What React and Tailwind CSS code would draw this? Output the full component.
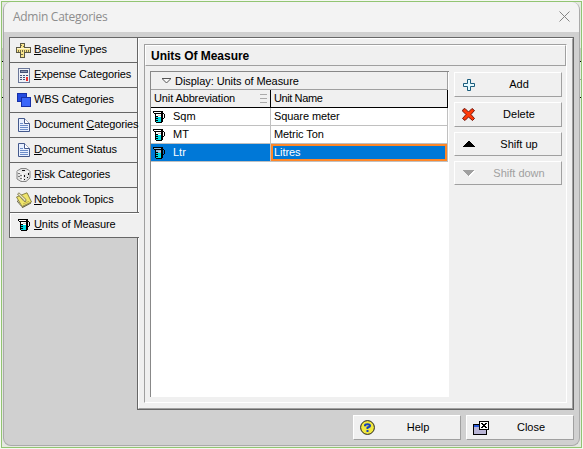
import React from "react";

const crisp = { shapeRendering: "crispEdges" };

function Beaker({ selected }) {
  return (
    <svg className="shrink-0" width="12" height="12" viewBox="0 0 12 12" {...crisp}>
      <path d="M1 1h8v2H1zM3 3h6v8H3z" fill={selected ? "#8fb7d6" : "#fff"} />
      <path d="M3 6h5v5H3z" fill="#00e0ea" />
      <path d="M5 4h3v1H5z" fill="#c5c5c5" />
      <path d="M0 0h10v1H0zM0 1h1v1H0zM1 2h8v1H1zM2 3h1v8H2zM8 1h2v10H8zM3 11h6v1H3zM10 2h1v1h-1zM11 3h1v4h-1zM10 7h1v1h-1zM3 5h2v1H3zM3 7h2v1H3zM3 9h2v1H3z" fill="#000" />
    </svg>
  );
}

function Ruler() {
  return (
    <svg className="-ml-px shrink-0" width="15" height="15" viewBox="0 0 15 15" {...crisp}>
      <path d="M4 0h5v4h6v6H9v5H4v-5H0V4h4z" fill="#5b5845" />
      <path d="M5 1h3v4h6v4H8v5H5V9H1V5h4z" fill="#f8e58d" />
      <path d="M1 5h13v1H1z" fill="#fff6cf" />
      <path d="M2 7h1v2H2zM4 7h1v2H4zM6 7h1v2H6zM8 7h1v2H8zM10 7h1v2h-1zM12 7h1v2h-1zM5 2h1v1H5zM7 3h1v1H7zM5 11h2v1H5z" fill="#77704a" />
    </svg>
  );
}

function Calculator() {
  return (
    <svg className="shrink-0" width="12" height="15" viewBox="0 0 12 15" {...crisp}>
      <path d="M0 0h12v15H0z" fill="#6b7799" />
      <path d="M1 1h10v13H1z" fill="#eef1f8" />
      <path d="M2 2h8v3H2z" fill="#46527a" />
      <path d="M3 3h6v1H3z" fill="#8793b2" />
      <path d="M2 7h2v1H2zM5 7h2v1H5zM2 9h2v1H2zM5 9h2v1H5zM2 11h2v1H2zM5 11h2v1H5zM8 7h2v1H8z" fill="#46527a" />
      <path d="M8 9h2v4H8z" fill="#f02f2f" />
    </svg>
  );
}

function Squares() {
  return (
    <svg className="shrink-0" width="14" height="14" viewBox="0 0 14 14" {...crisp}>
      <path d="M0 0h10v9H0z" fill="#1730a8" />
      <path d="M1 1h8v7H1z" fill="#244be0" />
      <path d="M4 4h10v10H4z" fill="#1730a8" />
      <path d="M5 5h8v8H5z" fill="#3a66fa" />
    </svg>
  );
}

function Document() {
  return (
    <svg className="shrink-0" width="12" height="14" viewBox="0 0 12 14">
      <path d="M.5.5h6l5 5v8H.5z" fill="#e8f0ff" stroke="#44598c" />
      <path d="M6.500.5v5h5" fill="#fff" stroke="#44598c" />
      <path d="M2 5.500h3M2 7.500h8M2 9.500h8M2 11.500h8" stroke="#6b8cc8" />
    </svg>
  );
}

function Dice() {
  return (
    <svg className="-ml-px shrink-0" width="15" height="14" viewBox="0 0 15 14">
      <path d="M5 .5h5L14 3v7l-4 3.500H5L1 11V3z" fill="#e3e3e3" stroke="#858585" />
      <path d="M1.500 3.500L6.500 5.500l7-2.500M6.500 5.500v7.500" fill="none" stroke="#f9f9f9" />
      <path d="M2.500 5h1v1h-1zM4.500 7h1v1h-1zM2.500 8h1v1h-1zM4.500 10h1v1h-1zM8 7h1v2H8zM12 5h1v2h-1zM11 9h1v1h-1zM8 11h1v1H8zM6 2h3v1H6z" fill="#111" />
    </svg>
  );
}

function Notebook() {
  return (
    <svg className="-ml-px shrink-0" width="16" height="16" viewBox="0 0 16 16">
      <path d="M1 8l5 7 9-4.500v1L6.500 16 1 9.500z" fill="#5f5a35" />
      <path d="M.5 5L11 .8 15.500 10 6 14.500z" fill="#f0e66c" stroke="#7f783d" strokeWidth=".9" />
      <path d="M1.500 2L3 .8 10 7.500l-.3 2L8 9.300z" fill="#eee9bf" stroke="#6e6a45" strokeWidth=".8" />
      <path d="M3 3.500l5.500 5" stroke="#aaa47a" strokeWidth=".8" />
      <path d="M7 12l6-2.700" stroke="#c4b749" />
    </svg>
  );
}

const tabs = [
  ["B", "aseline Types", "", <Ruler />],
  ["E", "xpense Categories", "", <Calculator />],
  ["", "WBS Categories", "", <Squares />],
  ["C", "ategories", "Document ", <Document />],
  ["D", "ocument Status", "", <Document />],
  ["R", "isk Categories", "", <Dice />],
  ["N", "otebook Topics", "", <Notebook />],
  ["U", "nits of Measure", "", <Beaker />],
];

const rows = [
  ["Sqm", "Square meter"],
  ["MT", "Metric Ton"],
  ["Ltr", "Litres"],
];

function Button({ icon, label, short, disabled }) {
  return (
    <button
      className={`flex w-[108px] shrink-0 items-center border-t border-l border-r border-b border-t-white border-l-white border-r-[#a0a0a0] border-b-[#a0a0a0] bg-[#f0f0f0] ${short ? "h-6" : "h-[25px]"} ${disabled ? "text-[#a0a0a0]" : "text-black"}`}
    >
      <span className="flex w-[27px] shrink-0 items-center justify-center">{icon}</span>
      <span className="flex-1 pr-[5px] text-center">{label}</span>
    </button>
  );
}

const Plus = () => (
  <svg width="12" height="12" viewBox="0 0 12 12">
    <path d="M4.500.5h3v4h4v3h-4v4h-3v-4h-4v-3h4z" fill="#e5faff" stroke="#1b5c7c" />
  </svg>
);
const Cross = () => (
  <svg width="13" height="13" viewBox="0 0 13 13">
    <path d="M1 1.500l2-1L6.500 4 10 .5l2.500 2L9 6.500l3.500 4-2 2-4-3.500L3 12.500l-2.500-2L4 6.500.5 3z" fill="#ff3a08" stroke="#74170c" />
  </svg>
);
const Triangle = ({ down }) => (
  <svg width="12" height="7" viewBox="0 0 12 7" {...crisp}>
    {down ? (
      <>
        <path d="M1 1h11L7 7H6z" fill="#fff" />
        <path d="M0 0h11L6 6H5z" fill="#a0a0a0" />
      </>
    ) : (
      <path d="M5 0h2v1h1v1h1v1h1v1h1v1h1v1H0V5h1V4h1V3h1V2h1V1h1z" fill="#000" />
    )}
  </svg>
);
const HelpIcon = () => (
  <svg width="15" height="15" viewBox="0 0 15 15">
    <circle cx="7.500" cy="7.500" r="6.900" fill="#f1e83e" stroke="#222" />
    <path d="M5 6.300V5.500Q5 4.300 7.500 4.300T10 5.800Q10 7 7.500 7.500V9" fill="none" stroke="#1540bd" strokeWidth="2" />
    <path d="M6.500 10h2v2h-2z" fill="#1540bd" />
  </svg>
);
const CloseIcon = () => (
  <svg width="16" height="14" viewBox="0 0 16 14" {...crisp}>
    <path d="M0 3h14v11H0z" fill="#000" />
    <path d="M1 4h12v2H1z" fill="#2859d8" />
    <path d="M1 6h12v7H1z" fill="#b9b5d5" />
    <path d="M6 0h10v9H6z" fill="#000" />
    <path d="M7 1h8v7H7z" fill="#fff" />
    <path d="M8 2h2v1H8zM12 2h2v1h-2zM9 3h4v1H9zM10 4h2v1h-2zM9 5h4v1H9zM8 6h2v1H8zM12 6h2v1h-2z" fill="#000" />
  </svg>
);

/* Slivers of the window behind the dialog that show at its two sides. */
const Behind = () => (
  <>
    <div className="h-[46px]" />
    <div className="h-[13px] bg-[#c8c8c8]" />
    <div className="h-px bg-black" />
    <div className="h-[17px]" />
    <div className="h-px bg-[#999]" />
    <div className="h-[17px]" />
    <div className="h-px bg-black" />
  </>
);

export default function App() {
  return (
    <div className="h-[449px] w-[583px] overflow-hidden bg-[#f5f8f2] p-px font-['Liberation_Sans',Arial,sans-serif] text-[11px] leading-[13px] text-black">
      <div className="flex h-[447px] w-[581px] border border-[#92c472] bg-[#e5e9e2]">
        <div className="w-px shrink-0"><Behind /></div>
        <div className="flex h-[444px] w-[577px] shrink-0 flex-col overflow-hidden rounded-lg border border-t-0 border-[#aaa] bg-[#d0d0d0]">
          <header className="flex h-[30px] shrink-0 items-center justify-between bg-[#f3f3f3] pr-[9px] pl-[9px] text-[#8d8d8d]">
            <h1 className="font-['Open_Sans',sans-serif] text-[12px] leading-4 tracking-[-0.28px]">Admin Categories</h1>
            <svg className="-mt-px" width="11" height="11" viewBox="0 0 11 11"><path d="M.5.5l10 10M10.500.5l-10 10" stroke="#858585" /></svg>
          </header>
          <div className="flex h-[378px] shrink-0 pt-[5px] pl-[5px]">
            <nav className="relative z-10 flex w-[129px] shrink-0 flex-col self-start border-l border-[#666]">
              {tabs.map(([key, rest, before, icon], i) => (
                <div
                  key={i}
                  className={`flex shrink-0 items-center bg-[#f0f0f0] ${i === 7 ? "h-[26px] w-[129px] border-t border-b border-t-[#666] border-b-[#666] shadow-[inset_1px_1px_0_white]" : "h-[25px] w-32 border-t border-r border-[#666]"}`}
                >
                  <span className="flex w-6 shrink-0 items-center justify-center pl-1">{icon}</span>
                  <span className="pb-0.5 whitespace-nowrap tracking-[-0.1px]">{before}<u>{key}</u>{rest}</span>
                </div>
              ))}
            </nav>
            <main className="-ml-px h-[373px] w-[437px] border border-[#666]">
              <div className="h-full border-t border-l border-r border-b border-t-white border-l-white border-r-[#a0a0a0] border-b-[#a0a0a0] bg-[#f0f0f0] pt-[5px] pl-[5px]">
                <section className="h-[359px] w-[423px] border-t border-r border-b border-l border-t-[#a0a0a0] border-r-white border-b-white border-l-[#a0a0a0]">
                  <h2 className="flex h-[21px] w-[421px] items-center border-t border-r border-b border-l border-t-white border-r-[#a0a0a0] border-b-[#a0a0a0] border-l-white pt-0.5 pl-[5px] text-[12px] font-bold tracking-[-0.03px]">Units Of Measure</h2>
                  <div className="flex gap-[5px] pt-[5px] pl-[5px]">
                    <div className="h-[326px] w-[299px] border-t border-l border-[#888] bg-white">
                      <div className="flex h-[18px] w-[297px] items-center border-r border-b border-[#a0a0a0] bg-[#f0f0f0] pl-[11px]">
                        <svg width="9" height="6" viewBox="0 0 9 6"><path d="M0 .5h9L4.500 5z" fill="#f8f8f8" stroke="#555" /></svg>
                        <span className="pt-px pl-1 tracking-[-0.06px]">Display: Units of Measure</span>
                      </div>
                      <div className="flex h-[18px] w-[297px] border-r border-b border-black bg-[#f0f0f0]">
                        <div className="flex w-[120px] items-center justify-between border-r border-black pr-[3px] pl-[3px]">
                          <span className="tracking-[-0.12px]">Unit Abbreviation</span>
                          <svg width="7" height="9" viewBox="0 0 7 9" {...crisp}><path d="M0 0h7v1H0zM0 4h7v1H0zM0 8h7v1H0z" fill="#aaa" /></svg>
                        </div>
                        <div className="flex items-center pl-[3px] tracking-[-0.4px]">Unit Name</div>
                      </div>
                      {rows.map(([short, name], i) => (
                        <div key={short} className={`flex h-[18px] w-[297px] border-r border-b border-[#c0c0c0] ${i === 2 ? "bg-[#0078d7] text-white" : "bg-white"}`}>
                          <div className="flex w-[120px] items-center border-r border-[#c0c0c0] pl-[2px]">
                            <Beaker selected={i === 2} />
                            <span className="pl-2">{short}</span>
                          </div>
                          <div className={`flex flex-1 items-center tracking-[-0.08px] ${i === 2 ? "border-2 border-[#ff8728] pl-px" : "pl-[3px]"}`}>{name}</div>
                        </div>
                      ))}
                    </div>
                    <div className="flex flex-col gap-[5px] pt-px">
                      <Button icon={<Plus />} label="Add" />
                      <Button icon={<Cross />} label="Delete" />
                      <Button icon={<Triangle />} label="Shift up" short />
                      <Button icon={<Triangle down />} label="Shift down" short disabled />
                    </div>
                  </div>
                </section>
              </div>
            </main>
          </div>
          <footer className="flex justify-end gap-[5px] pt-[5px] pr-[5px]">
            <Button icon={<HelpIcon />} label="Help" />
            <Button icon={<CloseIcon />} label="Close" />
          </footer>
        </div>
        <div className="w-px shrink-0"><Behind /></div>
      </div>
    </div>
  );
}
